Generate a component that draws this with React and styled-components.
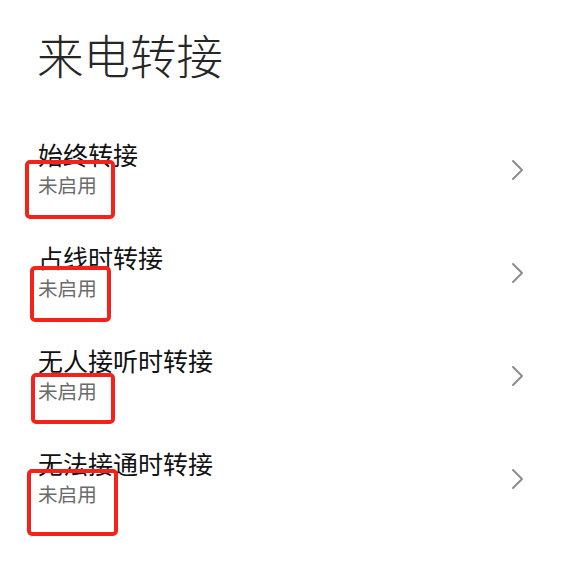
import React from 'react'
import styled, { createGlobalStyle } from 'styled-components'

const GlobalStyle = createGlobalStyle`
  html, body {
    margin: 0;
    padding: 0;
    background: #ffffff;
  }
  body {
    font-family: "Noto Sans CJK SC", "Noto Sans", sans-serif;
  }
`

const items = [
  { title: '始终转接', status: '未启用', mark: { left: 25, top: 42, width: 90, height: 59 } },
  { title: '占线时转接', status: '未启用', mark: { left: 30, top: 45, width: 81, height: 56 } },
  { title: '无人接听时转接', status: '未启用', mark: { left: 31, top: 49, width: 84, height: 51 } },
  { title: '无法接通时转接', status: '未启用', mark: { left: 27, top: 42, width: 91, height: 67 } },
]

const Page = styled.div`
  width: 562px;
  height: 583px;
  background: #fff;
  overflow: hidden;
`

const Header = styled.h1`
  margin: 0;
  height: 118px;
  padding: 24px 0 0 37px;
  box-sizing: border-box;
  font-size: 46.5px;
  line-height: 60px;
  font-weight: 300;
  color: #262626;
`

const List = styled.ul`
  list-style: none;
  margin: 0;
  padding: 0;
`

const Row = styled.li`
  position: relative;
  height: 103px;
  display: flex;
  align-items: center;
  justify-content: space-between;
  padding: 0 36px 0 38px;
`

const Texts = styled.div`
  display: flex;
  flex-direction: column;
`

const Title = styled.span`
  font-size: 25px;
  line-height: 30px;
  color: #111;
`

const Status = styled.span`
  font-size: 19.6px;
  line-height: 32px;
  color: #6b6b6b;
`

const Mark = styled.div`
  position: absolute;
  border: 4px solid #f5221b;
  border-radius: 5px;
  box-sizing: border-box;
  pointer-events: none;
`

const Chevron = () => (
  <svg width="16" height="22" viewBox="0 0 16 22" fill="none">
    <path d="M3 2 L12 11 L3 20" stroke="#8c8c8c" strokeWidth="2" strokeLinecap="round" strokeLinejoin="round" />
  </svg>
)

export default function App() {
  return (
    <Page>
      <GlobalStyle />
      <Header>来电转接</Header>
      <List>
        {items.map((item) => (
          <Row key={item.title}>
            <Texts>
              <Title>{item.title}</Title>
              <Status>{item.status}</Status>
            </Texts>
            <Chevron />
            <Mark style={item.mark} />
          </Row>
        ))}
      </List>
    </Page>
  )
}
